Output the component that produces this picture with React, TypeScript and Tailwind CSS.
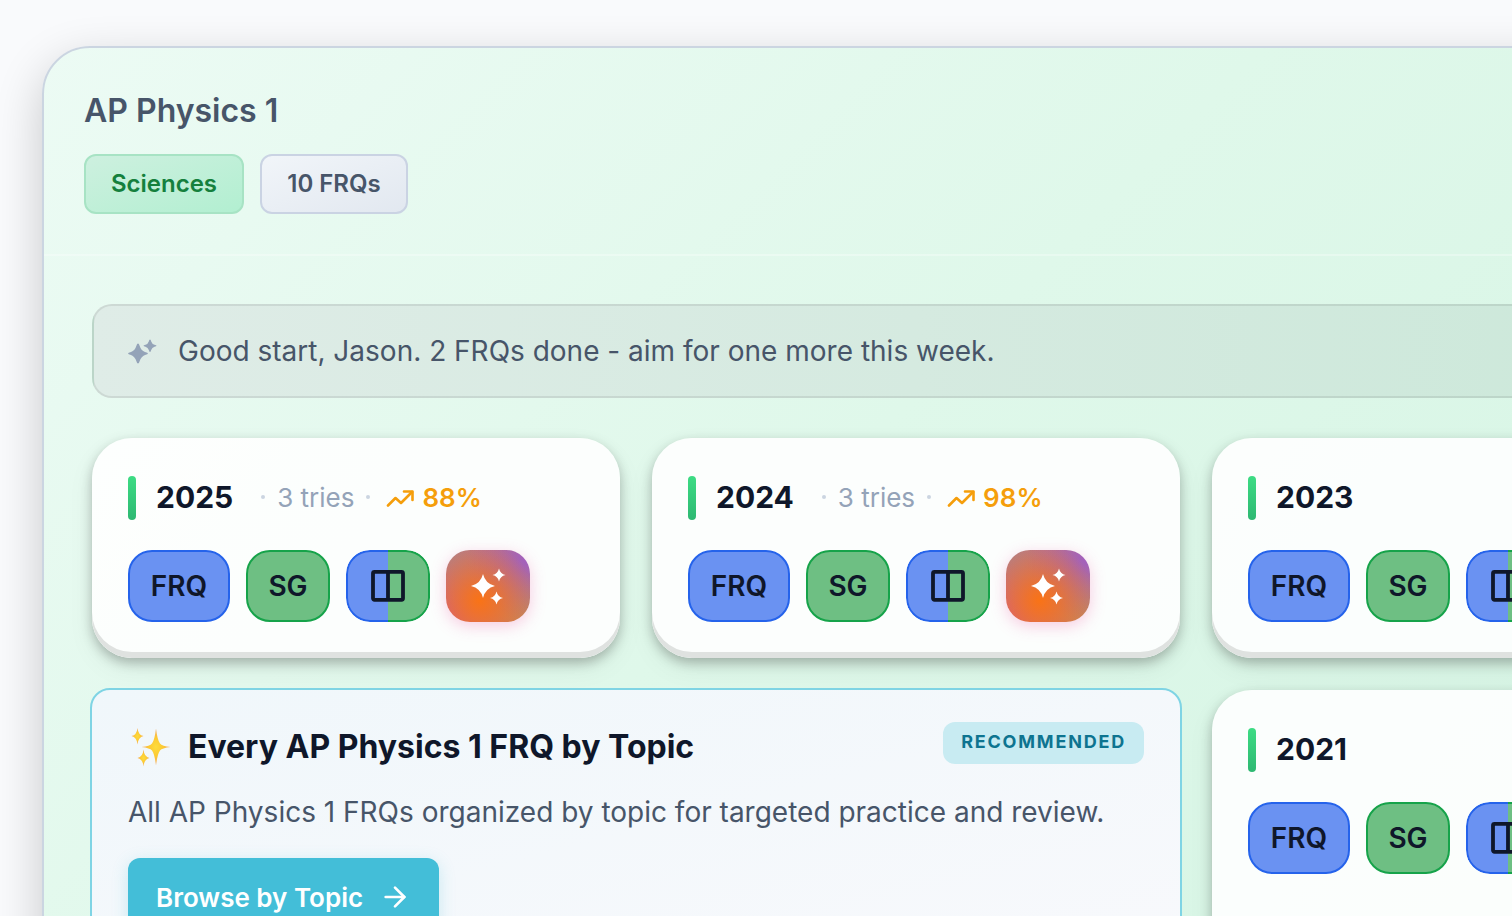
import { ArrowRight } from "lucide-react";

type Paper = {
  year: number;
  tries?: number;
  score?: number;
};

const papers: Paper[] = [
  { year: 2025, tries: 3, score: 88 },
  { year: 2024, tries: 3, score: 98 },
  { year: 2023 },
];

const TrendIcon = () => (
  <svg width="28" height="20" viewBox="0 0 28 20" fill="none" stroke="currentColor" strokeWidth="2.6" strokeLinecap="round" strokeLinejoin="round" aria-hidden="true">
    <path d="M2 18.500 9.500 11l5.500 5L26 5" />
    <path d="M18 4.500h8.500V13" />
  </svg>
);

const HintIcon = () => (
  <svg className="shrink-0 text-[#94a3b8]" width="30" height="28" viewBox="0 0 30 28" fill="currentColor" aria-hidden="true">
    <path d="M10 6.500Q11 6.500 11.500 8.500Q13 13.500 17 15Q20 15.800 20 16.500Q20 17.200 17 18Q13 19.500 11.500 24.500Q11 26.500 10 26.500Q9 26.500 8.500 24.500Q7 19.500 3 18Q0 17.200 0 16.500Q0 15.800 3 15Q7 13.500 8.500 8.500Q9 6.500 10 6.500Z" />
    <path d="M22 2.500Q22.800 2.500 23.200 4.500Q24 7 26.500 7.700Q28.500 8.200 28.500 8.700Q28.500 9.200 26.500 9.700Q24 10.500 23.200 13Q22.800 15 22 15Q21.200 15 20.800 13Q20 10.500 17.500 9.700Q15.500 9.200 15.500 8.700Q15.500 8.200 17.500 7.700Q20 7 20.800 4.500Q21.200 2.500 22 2.500Z" />
  </svg>
);

const SplitIcon = () => (
  <svg width="36" height="34" viewBox="0 0 36 34" fill="none" stroke="currentColor" strokeWidth="3.8" aria-hidden="true">
    <rect x="3" y="2.800" width="30" height="28" rx="1.500" />
    <path d="M18 3v28" />
  </svg>
);

const StarsIcon = () => (
  <svg width="38" height="38" viewBox="0 0 38 38" fill="currentColor" aria-hidden="true">
    <path d="M14 7q2.300 9.700 12 12q-9.700 2.300-12 12q-2.300-9.700-12-12q9.700-2.300 12-12Z" />
    <path d="M30 1.500q1.200 5.300 6.500 6.500q-5.300 1.200-6.500 6.500q-1.200-5.300-6.500-6.500q5.300-1.200 6.500-6.500Z" />
    <path d="M27.500 24.500q1.200 5.300 6.500 6.500q-5.300 1.200-6.500 6.500q-1.200-5.300-6.500-6.500q5.300-1.200 6.500-6.500Z" />
  </svg>
);

const GoldSparkles = () => (
  <svg width="44" height="40" viewBox="0 0 44 40" aria-hidden="true">
    <defs>
      <radialGradient id="gold">
        <stop offset="0" stopColor="#fddc3c" />
        <stop offset="0.500" stopColor="#fcc934" />
        <stop offset="1" stopColor="#f2a765" />
      </radialGradient>
    </defs>
    <g fill="url(#gold)">
      <path d="M28 1.500q1.500 12 4 15q2 2.500 10.500 3.500q-8.500 1-10.500 3.500q-2.500 3-4 15q-1.500-12-4-15q-2-2.500-10.500-3.500q8.500-1 10.500-3.500q2.500-3 4-15Z" />
      <path d="M9.500 1q.7 7 6 8q-5.300 1-6 8.500q-.7-7.500-6-8.500q5.300-1 6-8Z" />
      <path d="M15.500 22.500q.7 7.500 6 8.500q-5.300 1-6 8.500q-.7-7.500-6-8.500q5.300-1 6-8.500Z" />
    </g>
  </svg>
);

const PaperCard = ({ year, tries, score }: Paper) => {
  return (
    <article className="rounded-[40px] bg-white/90 p-9 shadow-[inset_0_-6px_0_#dfe2e0,0_5px_12px_rgba(0,0,0,0.25),0_10px_28px_rgba(0,0,0,0.06)]">
      <div className="flex h-12 items-center">
        <span className="mr-5 h-11 w-2 rounded-full bg-linear-to-b from-[#3ddc84] to-[#2eb872]" />
        <h2 className="pb-0.5 text-[30px] font-bold text-[#0f172a]">{year}</h2>
        {tries && (
          <div className="ml-7 flex items-center gap-3 pb-0.5 text-[26px] text-[#94a3b8]">
            <span className="size-1 rounded-full bg-[#cbd5e1]" />
            <span>{tries} tries</span>
            <span className="size-1 rounded-full bg-[#cbd5e1]" />
            <span className="ml-1 flex items-center gap-2 font-semibold text-[#f59e0b]">
              <TrendIcon />
              {score}%
            </span>
          </div>
        )}
      </div>
      <div className="mt-7 flex gap-4 text-[28px] font-semibold text-[#0f172a]">
        <button className="h-[72px] w-[102px] rounded-3xl border-2 border-[#2563eb] bg-[#6a92f2]">FRQ</button>
        <button className="h-[72px] w-[84px] rounded-3xl border-2 border-[#16a34a] bg-[#6ebf83]">SG</button>
        <button aria-label="Side by side" className="relative flex h-[72px] w-[84px] overflow-hidden rounded-3xl">
          <span className="h-full flex-1 rounded-l-3xl border-2 border-r-0 border-[#2563eb] bg-[#6a92f2]" />
          <span className="h-full flex-1 rounded-r-3xl border-2 border-l-0 border-[#16a34a] bg-[#6ebf83]" />
          <span className="absolute inset-0 flex items-center justify-center">
            <SplitIcon />
          </span>
        </button>
        <button
          aria-label="AI practice"
          className="flex h-[72px] w-[84px] items-center justify-center rounded-3xl bg-[radial-gradient(circle_at_40%_70%,#f97316_0%,transparent_80%),radial-gradient(circle_at_100%_10%,#a05cc6_0%,transparent_60%),radial-gradient(circle_at_0%_0%,#b08484_0%,transparent_60%),linear-gradient(90deg,#cf5c90,#c08a5a)] text-white shadow-[0_4px_16px_rgba(236,72,153,0.28)]"
        >
          <StarsIcon />
        </button>
      </div>
    </article>
  );
};

const TopicCard = () => {
  return (
    <section className="col-span-2 -m-0.5 rounded-[20px] border-2 border-[#7fd4e4] bg-linear-to-br from-[#f0f7fb] to-[#f8f9fc] px-9 pt-8 pb-9">
      <div className="flex items-start justify-between">
        <div className="flex h-[50px] items-center gap-4">
          <GoldSparkles />
          <h2 className="text-[32px] font-bold text-[#0f172a]">Every AP Physics 1 FRQ by Topic</h2>
        </div>
        <span className="rounded-xl bg-[#c8ebf2] px-[18px] pt-[7px] pb-[9px] text-[18px] leading-[26px] font-bold tracking-widest text-[#0e7490]">
          RECOMMENDED
        </span>
      </div>
      <p className="mt-[18px] text-[28px] leading-[44px] text-[#475569]">
        All AP Physics 1 FRQs organized by topic for targeted practice and review.
      </p>
      <a
        href="#topics"
        className="mt-6 inline-flex h-[78px] items-center gap-4 rounded-xl bg-[#43bed8] px-7 text-[26px] font-semibold text-white shadow-[0_4px_16px_rgba(67,190,216,0.25)]"
      >
        Browse by Topic
        <ArrowRight size={32} />
      </a>
    </section>
  );
};

export default function App() {
  return (
    <div className="h-screen overflow-hidden bg-[#f9fafc] pt-[46px] pl-[42px] font-['Inter',sans-serif]">
      <main className="w-max rounded-[48px] border-2 border-[#cbd5e1] bg-linear-135 from-[#ecfbf4] via-[#dff8ea] via-45% to-[#d4f4e3] shadow-[0_16px_48px_rgba(0,0,0,0.2)]">
        <header className="border-b-2 border-white/30 px-10 pt-10 pb-10">
          <h1 className="text-[32px] leading-[46px] font-semibold text-[#475569]">AP Physics 1</h1>
          <div className="mt-5 flex gap-4 text-[24px] font-semibold">
            <span className="flex h-[60px] w-40 items-center justify-center rounded-xl border-2 border-[#a7e3c4] bg-linear-to-br from-[#cdf0df] to-[#b2efd1] text-[#15803d]">
              Sciences
            </span>
            <span className="flex h-[60px] w-[148px] items-center justify-center rounded-xl border-2 border-[#cad3e3] bg-linear-to-br from-[#f1f5f9] to-[#e2e8f0] text-[#475569]">
              10 FRQs
            </span>
          </div>
        </header>
        <div className="px-12 pt-12 pb-12">
          <div className="flex h-[94px] items-center gap-5 rounded-[20px] border-2 border-black/8 bg-linear-to-r from-[#dfece7] to-[#cbe8d9] px-[34px]">
            <HintIcon />
            <p className="text-[28px] text-[#475569]">Good start, Jason. 2 FRQs done - aim for one more this week.</p>
          </div>
          <div className="mt-10 grid grid-cols-[repeat(3,528px)] gap-8">
            {papers.map((paper) => (
              <PaperCard key={paper.year} {...paper} />
            ))}
            <TopicCard />
            <PaperCard year={2021} />
          </div>
        </div>
      </main>
    </div>
  );
}
